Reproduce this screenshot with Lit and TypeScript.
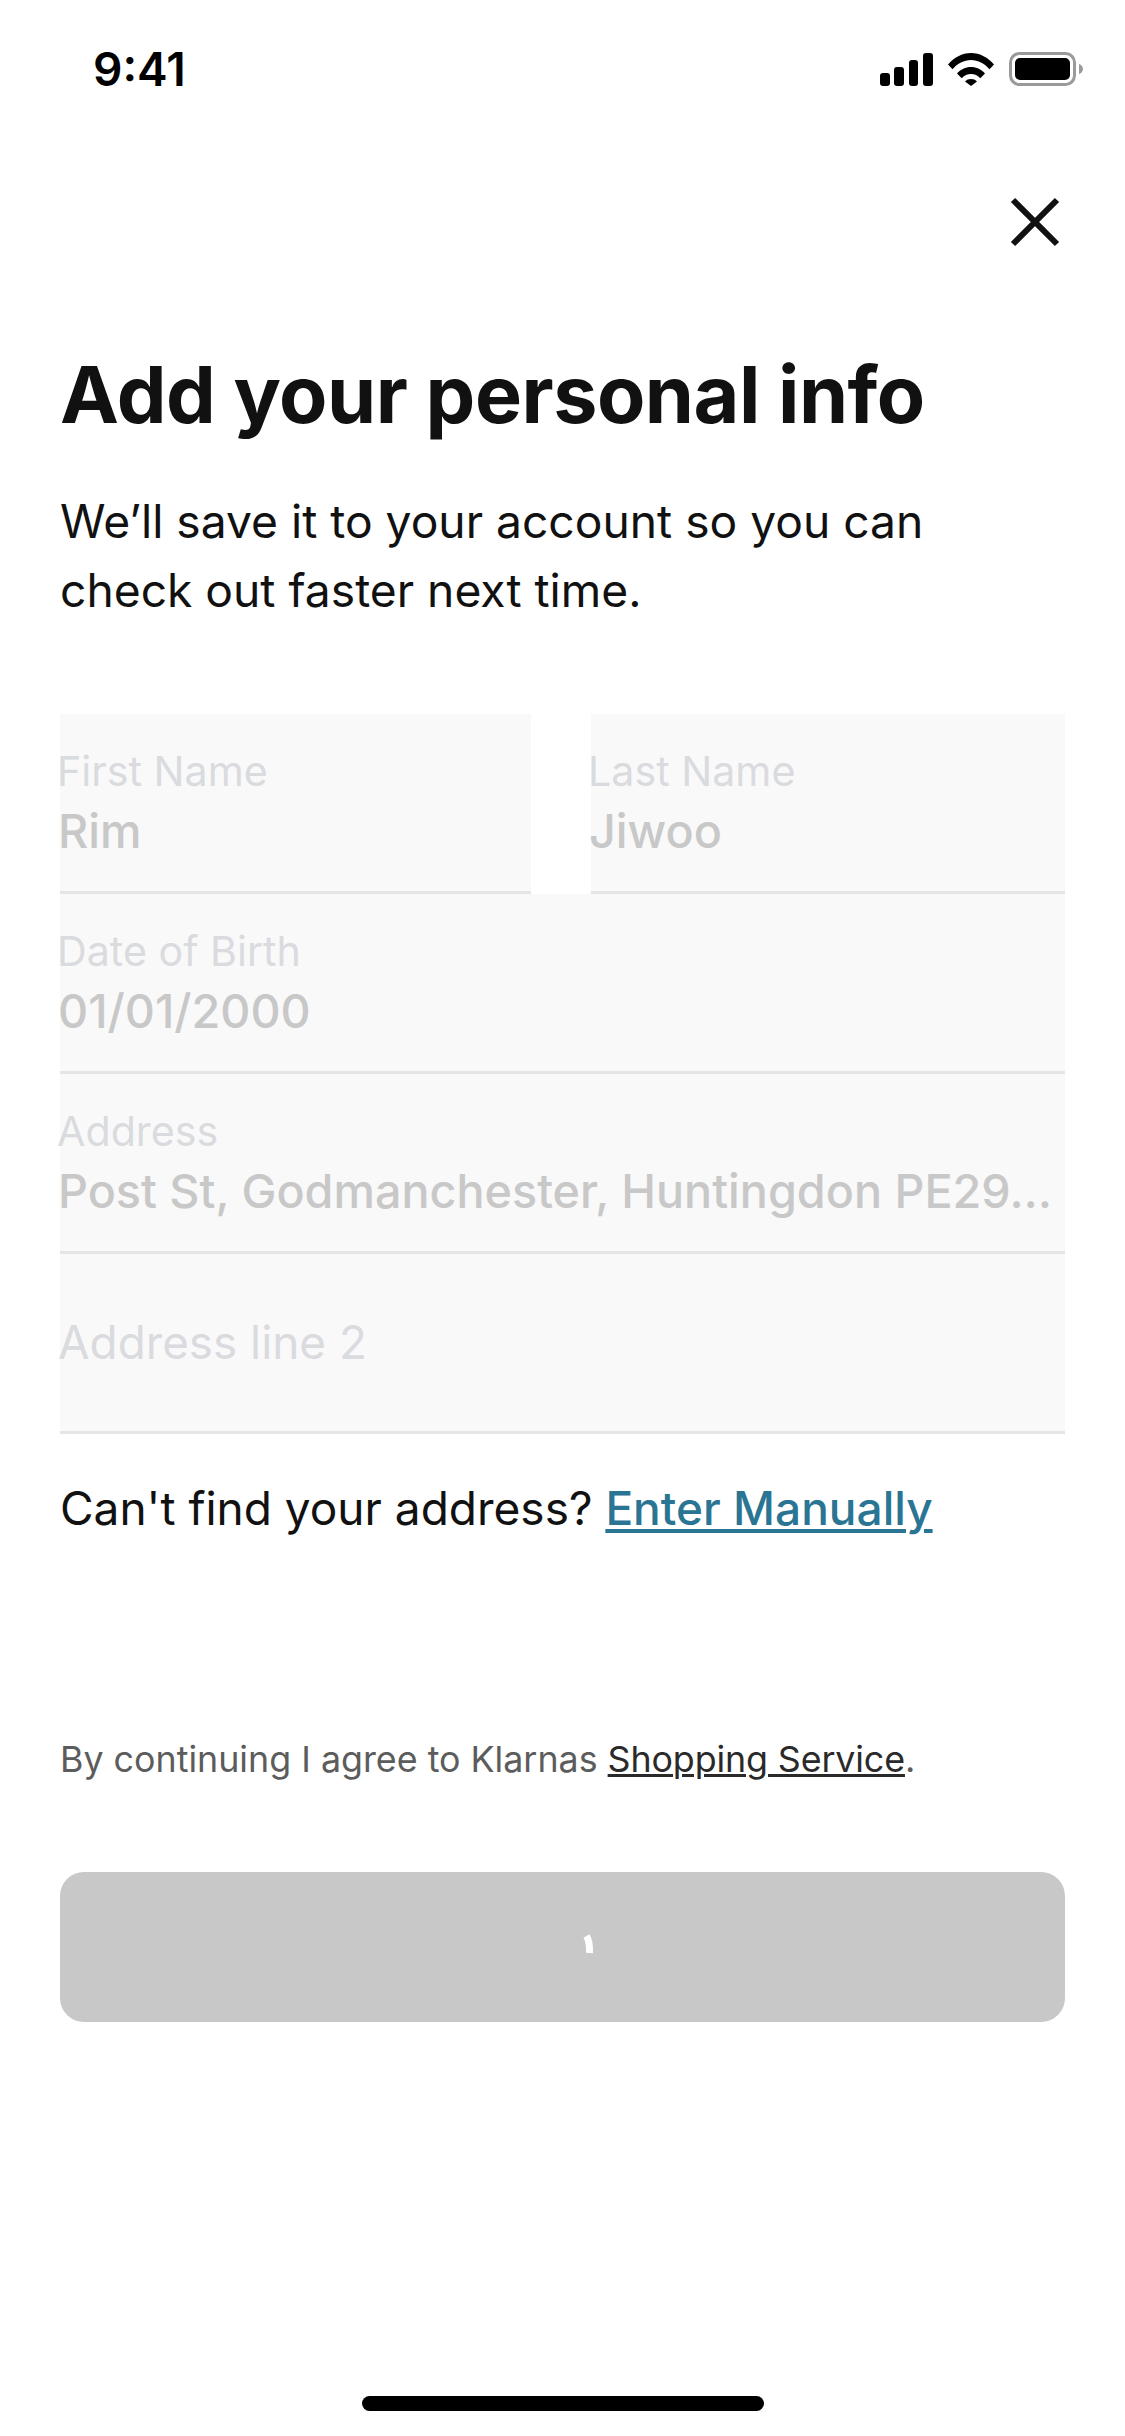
import { LitElement, html, css, svg } from 'lit';
import { customElement, property } from 'lit/decorators.js';

@customElement('form-field')
export class FormField extends LitElement {
  @property({ type: String }) label = '';
  @property({ type: String }) value = '';

  static styles = css`
    :host {
      display: flex;
      flex-direction: column;
      justify-content: center;
      box-sizing: border-box;
      height: 180px;
      min-width: 0;
      background: #f9f9f9;
      border-bottom: 3px solid #e4e5e7;
    }
    .label {
      font-size: 41.200px;
      line-height: 54px;
      margin-bottom: 2px;
      color: #dadbdf;
      margin-left: -3px;
    }
    .value {
      font-size: 46.700px;
      line-height: 62px;
      font-weight: 500;
      color: #c8c8c8;
      margin-left: -2px;
      white-space: nowrap;
    }
    .placeholder {
      font-size: 45.800px;
      line-height: 62px;
      color: #dadbdf;
      margin-left: -2px;
    }
  `;

  render() {
    if (!this.value) return html`<div class="placeholder">${this.label}</div>`;
    return html`
      <div class="label">${this.label}</div>
      <div class="value">${this.value}</div>
    `;
  }
}

@customElement('app-root')
export class AppRoot extends LitElement {
  static styles = css`
    :host {
      display: flex;
      flex-direction: column;
      width: 1125px;
      height: 2436px;
      background: #fff;
      font-family: Inter, 'Noto Sans', sans-serif;
      color: #111;
      overflow: hidden;
    }
    .status {
      display: flex;
      align-items: center;
      justify-content: space-between;
      height: 138px;
      padding: 0 40px 0 93px;
      flex: none;
    }
    .time {
      font-size: 46px;
      font-weight: 600;
      color: #000;
    }
    .status-icons {
      display: flex;
      align-items: center;
      gap: 15px;
    }
    .status-icons svg { display: block; }
    .close-row {
      display: flex;
      justify-content: flex-end;
      padding: 59px 65px 0 0;
    }
    .close-row svg { display: block; }
    main {
      display: flex;
      flex-direction: column;
      padding: 0 60px;
    }
    h1 {
      margin: 102px 0 0;
      font-size: 79px;
      line-height: 90px;
      font-weight: 700;
      color: #111;
      letter-spacing: -0.5px;
    }
    .intro {
      margin: 48px 0 0;
      font-size: 46.200px;
      line-height: 69px;
      color: #111;
    }
    .fields {
      display: grid;
      grid-template-columns: 471px 474px;
      justify-content: space-between;
      margin-top: 89px;
    }
    .wide { grid-column: 1 / -1; }
    .find {
      margin: 42px 0 0;
      font-size: 46px;
      line-height: 64px;
      color: #111;
    }
    .find a {
      color: #2a7593;
      font-weight: 500;
      text-decoration: underline;
      text-decoration-thickness: 4px;
      text-underline-offset: 4px;
    }
    .legal {
      margin: 194px 0 0;
      font-size: 35.800px;
      line-height: 50px;
      color: #5c5c5c;
    }
    .legal a {
      color: #2a2a2a;
      letter-spacing: -0.12px;
      text-decoration: underline;
      text-decoration-thickness: 3px;
    }
    .submit {
      display: flex;
      align-items: center;
      justify-content: center;
      height: 150px;
      margin-top: 88px;
      border: 0;
      padding: 0;
      border-radius: 24px;
      background: #c8c8c8;
    }
    .submit svg { display: block; }
    .home {
      flex: none;
      align-self: center;
      width: 402px;
      height: 15px;
      margin-top: auto;
      margin-bottom: 25px;
      border-radius: 8px;
      background: #000;
    }
  `;

  render() {
    return html`
      <div class="status">
        <span class="time">9:41</span>
        <div class="status-icons">
          <svg width="53" height="33" viewBox="0 0 53 33" fill="#000">
            <rect x="0" y="20" width="10" height="13" rx="3" />
            <rect x="14" y="14" width="10" height="19" rx="3" />
            <rect x="29" y="7" width="9" height="26" rx="3" />
            <rect x="43" y="0" width="10" height="33" rx="3" />
          </svg>
          <svg width="46" height="33" viewBox="0 0 46 33" fill="#000">
            <path d="M0 11.5C6 4.5 14 0 23 0s17 4.500 23 11.500l-4.500 4.700C36.500 10.500 30 7 23 7S9.500 10.500 4.500 16.200Z" />
            <path d="M9 20.500C12.500 16.500 17.500 14 23 14s10.500 2.500 14 6.500l-4.700 4.800C30 22.500 26.500 21 23 21s-7 1.500-9.300 4.300Z" />
            <path d="M17 28.500C18.500 26.800 20.500 26 23 26s4.500.8 6 2.500L23 33Z" />
          </svg>
          ${svg`<svg width="76" height="34" viewBox="0 0 76 34">
            <rect x="1.500" y="1.500" width="64" height="31" rx="9" fill="none" stroke="#9a9a9a" stroke-width="3" />
            <rect x="6" y="6" width="55" height="22" rx="5" fill="#000" />
            <path d="M70 12c2.500.8 4 2.800 4 5s-1.500 4.200-4 5Z" fill="#9a9a9a" />
          </svg>`}
        </div>
      </div>
      <div class="close-row">
        <svg width="50" height="50" viewBox="0 0 50 50" fill="none" stroke="#111" stroke-width="6">
          <path d="M3 3L47 47M47 3L3 47" />
        </svg>
      </div>
      <main>
        <h1>Add your personal info</h1>
        <p class="intro">We’ll save it to your account so you can<br />check out faster next time.</p>
        <div class="fields">
          <form-field label="First Name" value="Rim"></form-field>
          <form-field label="Last Name" value="Jiwoo"></form-field>
          <form-field class="wide" label="Date of Birth" value="01/01/2000"></form-field>
          <form-field class="wide" label="Address" value="Post St, Godmanchester, Huntingdon PE29…"></form-field>
          <form-field class="wide" label="Address line 2"></form-field>
        </div>
        <p class="find">Can't find your address? <a>Enter Manually</a></p>
        <p class="legal">By continuing I agree to Klarnas <a>Shopping Service</a>.</p>
        <button class="submit" aria-label="Continue">
          <svg width="70" height="70" viewBox="0 0 70 70" fill="none" stroke="#fff" stroke-width="7">
            <path d="M58.500 24Q62 30 61.500 41" />
          </svg>
        </button>
      </main>
      <div class="home"></div>
    `;
  }
}
